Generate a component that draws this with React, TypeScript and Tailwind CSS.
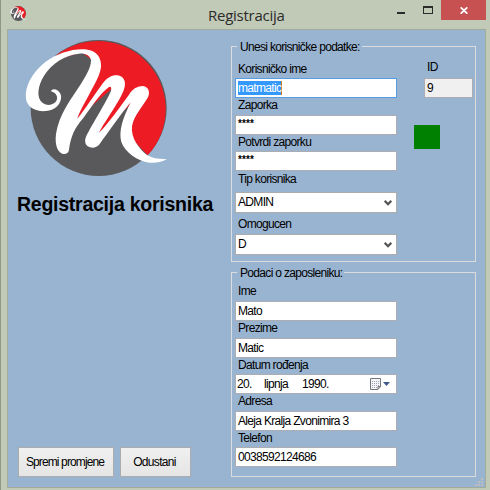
import type { ReactNode } from "react";

function Logo({ className }: { className: string }) {
  return (
    <svg viewBox="0 0 480 465" className={className}>
      <circle cx="251" cy="234" r="204" fill="#59595b" />
      <path
        d="M98 99 A204 204 0 0 1 398 376 L335 310 L390 185 L252 308 L310 160 L187 265 L242 100 L200 66Z"
        fill="#ed1c24"
      />
      <path
        d="M108 184C110 177 119 176 127 181C136 187 140 196 138 206C135 225 119 240 93 243C63 246 37 232 33 207C28 168 53 126 91 96C129 67 183 53 218 59C246 64 260 83 258 111C255 137 238 164 222 194C207 222 191 250 187 266C208 241 241 190 264 159C278 141 293 134 308 136C324 138 333 152 329 170C323 203 269 273 252 308C274 288 320 225 342 194C353 176 368 168 384 168C401 171 406 186 399 202C384 228 356 258 351 289C347 324 372 357 397 376C414 386 435 388 455 387C443 396 422 400 403 398C367 394 331 368 319 336C310 304 324 263 347 217C317 253 281 305 254 342C244 355 229 356 218 349C210 342 208 332 213 320C231 283 276 213 288 182C290 173 288 167 281 172C255 190 225 238 205 264C178 294 167 321 162 359C161 371 149 373 142 371C127 366 119 343 123 312C131 255 166 210 200 158C216 133 228 111 228 91C226 77 211 69 192 71C152 74 109 101 88 136C68 168 63 204 83 219C99 230 119 224 125 211C129 200 124 189 108 184Z"
        fill="white"
      />
    </svg>
  );
}

function Group({ title, children, className }: { title: string; children: ReactNode; className: string }) {
  return (
    <section className={`box-border border border-[#dcdcdc] ${className}`}>
      <div className="-mt-[7px] ml-[5px] h-[14px] w-fit bg-[#99b4d1] pr-[2px] pl-[3px]">{title}</div>
      {children}
    </section>
  );
}

function Field({ label, labelClass, boxClass = "h-5 border-[#abadb3]", children }: { label: string; labelClass: string; boxClass?: string; children: ReactNode }) {
  return (
    <label className="block w-[162px]">
      <div className={`pl-[3px] ${labelClass}`}>{label}</div>
      <div className={`flex items-center border bg-white pl-[2px] ${boxClass}`}>{children}</div>
    </label>
  );
}

function Chevron() {
  return (
    <svg width="8" height="7" viewBox="0 0 8 7" className="mr-1 ml-auto">
      <path d="M0.7 1.8L4 5.2L7.3 1.8" fill="none" stroke="#555" strokeWidth="2.3" />
    </svg>
  );
}

function CalendarIcon() {
  return (
    <svg width="20" height="12" viewBox="0 0 20 12" className="mr-[6px] ml-auto">
      <path d="M0.5 0.5H10.5V8.5L8 11.5H0.5Z" fill="#f4f5f8" stroke="#77777b" />
      <path d="M2 3.5H9M2 5.5H9M2 7.5H9M2 9.5H7" stroke="#a2a6b2" strokeWidth="1" strokeDasharray="1 1" />
      <path d="M8 11V8.5H10.5" fill="none" stroke="#77777b" />
      <path d="M13 4H20L16.5 8Z" fill="#40598c" />
    </svg>
  );
}

export default function App() {
  return (
    <div className="flex h-[490px] w-[490px] flex-col overflow-hidden border-l border-[#8e9688] bg-[#c1cab7] font-['Liberation_Sans',Arial,sans-serif] text-[12px] leading-[14px] tracking-[-0.68px] whitespace-pre text-black">
      <header className="flex h-[29px] shrink-0 items-start">
        <Logo className="mt-[5px] ml-[8px] h-[17px] w-[18px]" />
        <h1 className="mt-[5px] ml-[181px] w-[80px] font-['Open_Sans','Noto_Sans',sans-serif] text-[15px] leading-[20px] tracking-[-0.25px] text-[#2b2b2b]">Registracija</h1>
        <div className="mt-3 ml-[109px] h-[2px] w-2 bg-[#2b2b2b]" />
        <div className="mt-[6px] ml-[18px] h-[8px] w-[10px] border border-t-2 border-[#2b2b2b]" />
        <div className="ml-[8px] flex h-5 w-[45px] items-center justify-center bg-[#c75050]">
          <svg width="8" height="7" viewBox="0 0 8 7">
            <path d="M0.7 0.3L7.3 6.7M7.3 0.3L0.7 6.7" stroke="white" strokeWidth="1.7" />
          </svg>
        </div>
      </header>
      <main className="ml-[6px] flex h-[459px] w-[479px] shrink-0 border border-[#a3ab9b] bg-[#99b4d1]">
        <div className="flex w-[223px] shrink-0 flex-col">
          <Logo className="ml-[7px] h-[155px] w-[160px]" />
          <h2 className="mt-[7px] ml-[9px] text-[19.5px] leading-[24px] font-bold tracking-[-0.25px]">Registracija korisnika</h2>
          <div className="mt-[231px] ml-[10px] flex gap-[6px]">
            <button className="h-[30px] w-[96px] border border-[#acacac] bg-linear-to-b from-[#f0f0f0] to-[#e5e5e5] pr-[2px] tracking-[-0.88px]">Spremi promjene</button>
            <button className="h-[30px] w-[71px] border border-[#acacac] bg-linear-to-b from-[#f0f0f0] to-[#e5e5e5] pr-[2px]">Odustani</button>
          </div>
        </div>
        <div className="flex w-[254px] flex-col pt-4">
          <Group title="Unesi korisničke podatke:" className="h-[216px] w-[245px]">
            <div className="flex">
              <div className="ml-[3px]">
                <Field label="Korisničko ime" labelClass="h-6 pt-2" boxClass="h-5 border-[#569de5]">
                  <span className="border-r border-[#d07a2b] bg-[#3399ff] text-white">matmatic</span>
                </Field>
                <Field label="Zaporka" labelClass="h-[17px]">
                  <span className="-mt-[2px] text-[10px] font-bold tracking-[0.1px]">****</span>
                </Field>
                <Field label="Potvrdi zaporku" labelClass="h-4">
                  <span className="-mt-[2px] text-[10px] font-bold tracking-[0.1px]">****</span>
                </Field>
                <Field label="Tip korisnika" labelClass="h-[21px] pt-[1px]" boxClass="h-[21px] border-[#acacac] pb-px">
                  ADMIN<Chevron />
                </Field>
                <Field label="Omogucen" labelClass="h-[21px] pt-1" boxClass="h-[21px] border-[#acacac] pb-px">
                  D<Chevron />
                </Field>
              </div>
              <div className="ml-[17px] pt-[6px]">
                <div className="ml-[13px] h-[18px]">ID</div>
                <div className="ml-[10px] h-5 w-[49px] border border-[#abadb3] bg-[#f0f0f0] pt-[2px] pl-[2px]">9</div>
                <div className="mt-[27px] h-6 w-[26px] bg-[#008000]" />
              </div>
            </div>
          </Group>
          <Group title="Podaci o zaposleniku:" className="mt-[10px] h-[205px] w-[245px]">
            <div className="ml-[3px]">
              <Field label="Ime" labelClass="h-[21px] pt-1">Mato</Field>
              <Field label="Prezime" labelClass="h-[17px]">Matic</Field>
              <Field label="Datum rođenja" labelClass="h-4">
                <span className="-ml-px w-[27px]">20.</span>
                <span className="w-[38px]">lipnja</span>
                <span>1990.</span>
                <CalendarIcon />
              </Field>
              <Field label="Adresa" labelClass="h-[17px]">Aleja Kralja Zvonimira 3</Field>
              <Field label="Telefon" labelClass="h-4">0038592124686</Field>
            </div>
          </Group>
          <svg width="8" height="8" viewBox="0 0 8 8" className="mt-[1px] mr-[2px] ml-auto shrink-0">
            <path d="M6 0h2v2H6zM3 3h2v2H3zM6 3h2v2H6zM0 6h2v2H0zM3 6h2v2H3zM6 6h2v2H6z" fill="#bdbdbd" />
          </svg>
        </div>
      </main>
    </div>
  );
}
